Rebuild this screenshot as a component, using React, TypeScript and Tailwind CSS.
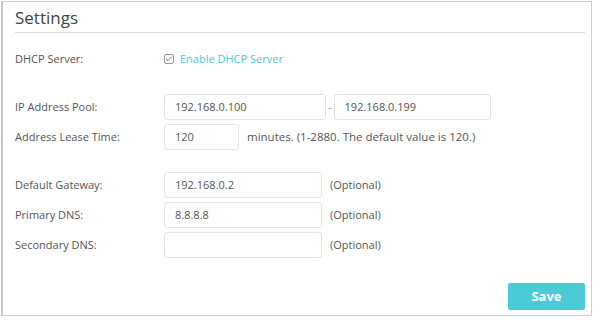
import { Check } from "lucide-react";

function Field({ value, width }: { value?: string; width: string }) {
    return (
        <div
            className={`${width} h-[26px] flex items-center px-[10px] border border-[#e3e3e3] rounded-[3px] bg-white text-[#555] text-[11px]`}
        >
            {value}
        </div>
    );
}

function Row({ label, children, className = "" }: { label: string; children: React.ReactNode; className?: string }) {
    return (
        <div className={`flex items-center h-[26px] ${className}`}>
            <div className="w-[149px] text-[#555] text-[11px]">{label}</div>
            <div className="flex items-center">{children}</div>
        </div>
    );
}

export default function App() {
    return (
        <main
            className="w-[596px] h-[320px] bg-white p-[1px] pr-[4px] pb-[4px]"
            style={{ fontFamily: '"Open Sans", "Liberation Sans", sans-serif' }}
        >
            <section className="h-full border border-[#cfcfcf] border-l-2 border-l-[#c8c8c8] flex flex-col pl-[12px] pr-[6px]">
                {/* Title */}
                <div className="h-[31px] flex items-end pb-[6px] border-b border-[#dcdcdc]">
                    <h1 className="text-[17px] leading-none text-[#444]">Settings</h1>
                </div>

                <Row label="DHCP Server:" className="mt-[13px]">
                    <div className="flex items-center gap-[6px]">
                        <div className="w-[10px] h-[10px] border border-[#9a9a9a] rounded-[2px] flex items-center justify-center">
                            <Check size={8} strokeWidth={3} className="text-[#4b8f96]" />
                        </div>
                        <span className="text-[#4acbd6] text-[11px]">Enable DHCP Server</span>
                    </div>
                </Row>

                <div className="mt-[22px] flex flex-col gap-[4px]">
                    <Row label="IP Address Pool:">
                        <Field value="192.168.0.100" width="w-[162px]" />
                        <span className="mx-[2px] text-[#999] text-[11px]">-</span>
                        <Field value="192.168.0.199" width="w-[157px]" />
                    </Row>
                    <Row label="Address Lease Time:">
                        <Field value="120" width="w-[75px]" />
                        <span className="ml-[8px] text-[#555] text-[11.5px]">
                            minutes. (1-2880. The default value is 120.)
                        </span>
                    </Row>
                </div>

                <div className="mt-[22px] flex flex-col gap-[4px]">
                    <Row label="Default Gateway:">
                        <Field value="192.168.0.2" width="w-[158px]" />
                        <span className="ml-[8px] text-[#555] text-[11px]">(Optional)</span>
                    </Row>
                    <Row label="Primary DNS:">
                        <Field value="8.8.8.8" width="w-[158px]" />
                        <span className="ml-[8px] text-[#555] text-[11px]">(Optional)</span>
                    </Row>
                    <Row label="Secondary DNS:">
                        <Field width="w-[158px]" />
                        <span className="ml-[8px] text-[#555] text-[11px]">(Optional)</span>
                    </Row>
                </div>

                <div className="flex justify-end mt-[25px]">
                    <button className="w-[77px] h-[27px] rounded-[2px] bg-[#4acbd6] text-white font-bold text-[13px]">
                        Save
                    </button>
                </div>
            </section>
        </main>
    );
}
